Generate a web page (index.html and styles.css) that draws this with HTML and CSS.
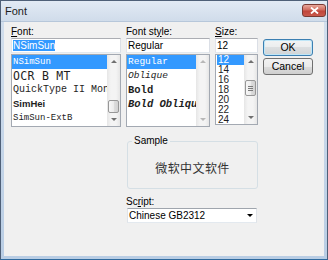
FILE: index.html
```html
<!DOCTYPE html>
<html lang="en">
<head>
    <meta charset="UTF-8">
    <title>Font</title>
    <link rel="stylesheet" href="styles.css">
</head>
<body>
<div class="window">
    <div class="titlebar">
        <span class="title">Font</span>
        <span class="close">
            <svg width="9" height="7" viewBox="0 0 9 7"><path d="M1 0.5 L8 6.5 M8 0.5 L1 6.5" stroke="#fff" stroke-width="1.8"/></svg>
        </span>
    </div>
    <div class="frame">
        <div class="client">
            <!-- font name -->
            <div class="column">
                <div class="label"><u>F</u>ont:</div>
                <div class="edit"><span class="sel">NSimSun</span></div>
                <div class="list">
                    <ul class="items">
                        <li class="current f-nsim">NSimSun</li>
                        <li class="f-ocr">OCR B MT</li>
                        <li class="f-quick">QuickType II Mono</li>
                        <li class="f-hei">SimHei</li>
                        <li class="f-ext">SimSun-ExtB</li>
                    </ul>
                    <div class="scroll">
                        <span class="arrow up"></span>
                        <div class="track"><span class="thumb at-end"></span></div>
                        <span class="arrow down"></span>
                    </div>
                </div>
            </div>

            <!-- font style -->
            <div class="column">
                <div class="label">Font st<u>y</u>le:</div>
                <div class="edit">Regular</div>
                <div class="list">
                    <ul class="items">
                        <li class="current s-reg">Regular</li>
                        <li class="s-obl">Oblique</li>
                        <li class="s-bold">Bold</li>
                        <li class="s-bobl">Bold Oblique</li>
                    </ul>
                    <div class="scroll disabled">
                        <span class="arrow up"></span>
                        <div class="track"></div>
                        <span class="arrow down"></span>
                    </div>
                </div>
            </div>

            <!-- size -->
            <div class="column">
                <div class="label"><u>S</u>ize:</div>
                <div class="edit">12</div>
                <div class="list list-size">
                    <ul class="items sizes">
                        <li class="current">12</li>
                        <li>14</li>
                        <li>16</li>
                        <li>18</li>
                        <li>20</li>
                        <li>22</li>
                        <li>24</li>
                    </ul>
                    <div class="scroll">
                        <span class="arrow up"></span>
                        <div class="track"><span class="thumb grip"></span></div>
                        <span class="arrow down"></span>
                    </div>
                </div>
            </div>

            <div class="buttons">
                <div class="btn default">OK</div>
                <div class="btn">Cancel</div>
            </div>

            <fieldset class="sample">
                <legend>Sample</legend>
                <div class="sample-text">微软中文软件</div>
            </fieldset>

            <div class="label wide">Sc<u>r</u>ipt:</div>
            <div class="combo">
                <span class="combo-text">Chinese GB2312</span>
                <span class="drop"></span>
            </div>
        </div>
    </div>
</div>
</body>
</html>
```

FILE: styles.css
```css
*{padding:0;margin:0;box-sizing:border-box;}

body{
    font-family: "Liberation Sans Narrow", "Liberation Sans", Arial, sans-serif;
    font-size: 10px;
    color: #000;
    background: #fff;
}

.window{
    width: 328px;
    height: 260px;
    border: 1px solid #4f6078;
    border-bottom-color: #2f6a9e;
    display: flex;
    flex-direction: column;
    background: linear-gradient(#d4e0ee, #b9cde4);
}

.titlebar{
    height: 21px;
    display: flex;
    align-items: flex-start;
    padding-left: 4px;
    background: linear-gradient(#e2eaf4, #d0dcea);
    border-bottom: 1px solid #b7c7da;
}
.titlebar .title{
    font-size: 11px;
    line-height: 14px;
    padding-top: 3px;
    color: #1c1c1c;
}
.titlebar .close{
    margin-left: auto;
    margin-right: 1px;
    margin-top: 3px;
    width: 24px;
    height: 13px;
    border: 1px solid #7b3a33;
    border-radius: 3px;
    background: linear-gradient(#e9a89c, #d06a5d 45%, #c0453a 55%, #c9594c);
    display: flex;
    align-items: center;
    justify-content: center;
}

.frame{
    flex: 1;
    display: flex;
    padding: 0 3px 3px 3px;
}

.client{
    flex: 1;
    background: #f0f0f0;
    padding: 3px 0 0 7px;
    display: grid;
    grid-template-columns: 110px 84px 43px 50px;
    column-gap: 5px;
    align-content: start;
    align-items: start;
}

.column{
    display: flex;
    flex-direction: column;
}

.label{
    height: 13px;
    line-height: 13px;
    font-size: 10px;
    color: #000;
}
.label.wide{
    grid-column: 2 / 4;
    margin-top: 6px;
}

.edit{
    height: 15px;
    border: 1px solid;
    border-color: #abadb3 #dbdfe6 #e3e9ef #e2e3ea;
    background: #fff;
    padding-left: 1px;
    line-height: 13px;
    white-space: nowrap;
    overflow: hidden;
}
.edit .sel{
    display: inline-block;
    background: #3399ff;
    color: #fff;
    line-height: 11px;
    margin-top: 1px;
    vertical-align: top;
}

.list{
    height: 73px;
    margin-top: 1px;
    border: 1px solid #a3a9b2;
    background: #fff;
    display: flex;
}
.list-size{
    height: 71px;
}

.items{
    list-style: none;
    flex: 1;
    min-width: 0;
    overflow: hidden;
}
.items li{
    height: 14px;
    line-height: 14px;
    padding-left: 1px;
    white-space: nowrap;
    overflow: hidden;
    color: #1e1e1e;
}
.items li.current{
    background: #3399ff;
    color: #fff;
}

.f-nsim{font-family: "Liberation Mono", monospace; font-size: 9px;}
.f-ocr{font-family: "DejaVu Sans Mono", monospace; font-size: 11.5px; letter-spacing: 0.3px;}
.f-quick{font-family: "Liberation Mono", monospace; font-size: 10px;}
.f-hei{font-size: 9.5px; font-weight: bold; color: #333;}
.f-ext{font-family: "Liberation Mono", monospace; font-size: 9px;}

.s-reg{font-family: "Liberation Mono", monospace; font-size: 9.5px;}
.s-obl{font-family: "Liberation Mono", monospace; font-size: 9.5px; font-style: italic;}
.s-bold{font-family: "Liberation Mono", monospace; font-size: 10.5px; font-weight: bold;}
.s-bobl{font-family: "Liberation Mono", monospace; font-size: 10.5px; font-weight: bold; font-style: italic;}

.sizes li{
    height: 10px;
    line-height: 10px;
    font-size: 10px;
    margin-left: 1px;
    padding-left: 1px;
}

.scroll{
    width: 13px;
    display: flex;
    flex-direction: column;
    background: linear-gradient(to right, #e6e6e6, #f4f4f4 30%, #f4f4f4 70%, #e6e6e6);
}
.arrow{
    height: 13px;
    flex: none;
    display: flex;
    align-items: center;
    justify-content: center;
}
.arrow::before{
    content: "";
    border-left: 3px solid transparent;
    border-right: 3px solid transparent;
}
.arrow.up::before{border-bottom: 3px solid #707070;}
.arrow.down::before{border-top: 3px solid #707070;}
.disabled .arrow.up::before{border-bottom-color: #b8b8b8;}
.disabled .arrow.down::before{border-top-color: #b8b8b8;}

.track{
    flex: 1;
    display: flex;
    flex-direction: column;
    padding: 0 1px;
}
.thumb{
    height: 13px;
    border: 1px solid #979797;
    border-radius: 2px;
    background: linear-gradient(to right, #f7f7f7, #ececec 50%, #dedede 50%, #d2d2d2);
}
.thumb.at-end{
    margin-top: auto;
}
.thumb.grip{
    height: 16px;
    margin-top: 12px;
    display: flex;
    align-items: center;
    justify-content: center;
}
.thumb.grip::before{
    content: "";
    width: 5px;
    height: 5px;
    background: repeating-linear-gradient(#7a7a7a 0 1px, transparent 1px 2px);
}

.buttons{
    display: flex;
    flex-direction: column;
    padding-top: 14px;
}
.btn{
    height: 17px;
    border: 1px solid #707070;
    border-radius: 3px;
    background: linear-gradient(#f2f2f2, #ebebeb 50%, #dddddd 50%, #cfcfcf);
    font-family: "Liberation Sans", Arial, sans-serif;
    font-size: 10.5px;
    line-height: 15px;
    text-align: center;
    color: #000;
}
.btn + .btn{
    margin-top: 2px;
}
.btn.default{
    border-color: #3c7fb1;
    box-shadow: inset 0 0 0 1px #bfe6f7;
    background: linear-gradient(#f2f4f5, #ebedee 50%, #dcdfe1 50%, #d0d4d6);
}

.sample{
    grid-column: 2 / 4;
    margin: 8px 0 0 1px;
    border: 1px solid #d5dfe5;
    border-radius: 3px;
    padding: 13px 0 12px;
    text-align: center;
    min-width: 0;
}
.sample legend{
    margin-left: 4px;
    padding: 0 2px;
    font-size: 10px;
    line-height: 12px;
    text-align: left;
}
.sample-text{
    font-family: "Noto Sans CJK SC", sans-serif;
    font-size: 12px;
    line-height: 16px;
    letter-spacing: 0.4px;
    color: #333;
}

.combo{
    grid-column: 2 / 4;
    margin-left: 1px;
    width: 130px;
    height: 15px;
    border: 1px solid;
    border-color: #9fa5ad #dfe3e8 #e3e9ef #dfe3e8;
    background: #fff;
    display: flex;
    line-height: 13px;
}
.combo-text{
    flex: 1;
    padding-left: 1px;
}
.combo .drop{
    width: 13px;
    display: flex;
    align-items: center;
    justify-content: center;
}
.combo .drop::before{
    content: "";
    border-left: 3px solid transparent;
    border-right: 3px solid transparent;
    border-top: 3px solid #000;
}
```
